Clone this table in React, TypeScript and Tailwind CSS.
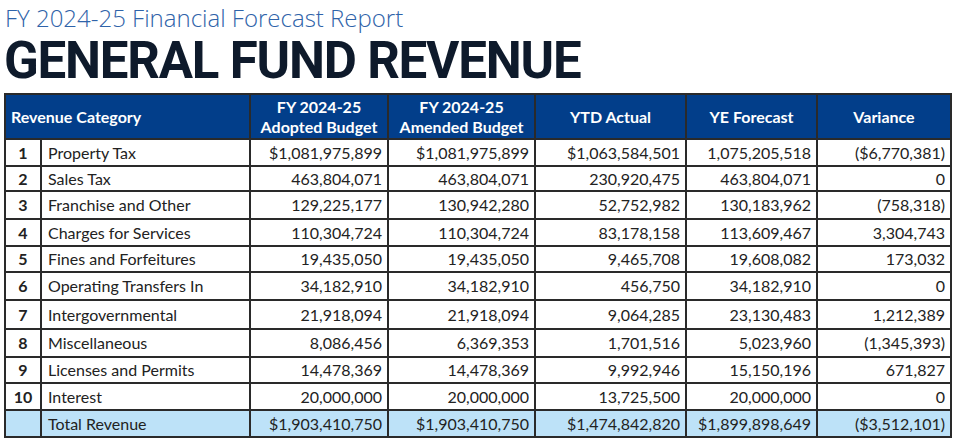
import React, { FC } from "react";

type Row = {
  n: string;
  name: string;
  adopted: string;
  amended: string;
  ytd: string;
  ye: string;
  variance: string;
  h: string;
};

const rows: Row[] = [
  { n: "1", name: "Property Tax", adopted: "$1,081,975,899", amended: "$1,081,975,899", ytd: "$1,063,584,501", ye: "1,075,205,518", variance: "($6,770,381)", h: "h-[27px]" },
  { n: "2", name: "Sales Tax", adopted: "463,804,071", amended: "463,804,071", ytd: "230,920,475", ye: "463,804,071", variance: "0", h: "h-[25px]" },
  { n: "3", name: "Franchise and Other", adopted: "129,225,177", amended: "130,942,280", ytd: "52,752,982", ye: "130,183,962", variance: "(758,318)", h: "h-[28px]" },
  { n: "4", name: "Charges for Services", adopted: "110,304,724", amended: "110,304,724", ytd: "83,178,158", ye: "113,609,467", variance: "3,304,743", h: "h-[27px]" },
  { n: "5", name: "Fines and Forfeitures", adopted: "19,435,050", amended: "19,435,050", ytd: "9,465,708", ye: "19,608,082", variance: "173,032", h: "h-[26px]" },
  { n: "6", name: "Operating Transfers In", adopted: "34,182,910", amended: "34,182,910", ytd: "456,750", ye: "34,182,910", variance: "0", h: "h-[28px]" },
  { n: "7", name: "Intergovernmental", adopted: "21,918,094", amended: "21,918,094", ytd: "9,064,285", ye: "23,130,483", variance: "1,212,389", h: "h-[29px]" },
  { n: "8", name: "Miscellaneous", adopted: "8,086,456", amended: "6,369,353", ytd: "1,701,516", ye: "5,023,960", variance: "(1,345,393)", h: "h-[28px]" },
  { n: "9", name: "Licenses and Permits", adopted: "14,478,369", amended: "14,478,369", ytd: "9,992,946", ye: "15,150,196", variance: "671,827", h: "h-[26px]" },
  { n: "10", name: "Interest", adopted: "20,000,000", amended: "20,000,000", ytd: "13,725,500", ye: "20,000,000", variance: "0", h: "h-[27px]" },
];

const th = "border-2 border-[#2a2a2a] px-2 text-center font-bold leading-[20px] text-white";
const td = "border-2 border-[#2a2a2a] pl-2 pr-[5px] text-right";

const App: FC = () => {
  return (
    <main className="h-[448px] w-[958px] overflow-hidden bg-white">
      <h2 className="pl-[5px] pt-[3px] font-['Open_Sans',sans-serif] text-[24px] font-light leading-[30px] text-[#2f63a9]">
        FY 2024-25 Financial Forecast Report
      </h2>
      <h1 className="mt-[-2px] pl-[4px] font-['Roboto',sans-serif] text-[51px] font-bold leading-[60px] tracking-[-1.2px] text-[#0e1a2b]">
        GENERAL FUND REVENUE
      </h1>
      <table className="ml-[4px] mt-[2px] w-[946px] table-fixed border-collapse border-2 border-[#2a2a2a] font-['Lato',sans-serif] text-[16px] leading-[20px] text-[#222]">
        <colgroup>
          <col className="w-[36px]" />
          <col className="w-[209px]" />
          <col className="w-[138px]" />
          <col className="w-[147px]" />
          <col className="w-[151px]" />
          <col className="w-[131px]" />
          <col className="w-[134px]" />
        </colgroup>
        <thead>
          <tr className="h-[45px] bg-[#023e8a]">
            <th colSpan={2} className={`${th} !pl-[5px] text-left`}>
              Revenue Category
            </th>
            <th className={th}>
              FY 2024-25
              <br />
              Adopted Budget
            </th>
            <th className={th}>
              FY 2024-25
              <br />
              Amended Budget
            </th>
            <th className={th}>YTD Actual</th>
            <th className={th}>YE Forecast</th>
            <th className={th}>Variance</th>
          </tr>
        </thead>
        <tbody>
          {rows.map((r) => (
            <tr key={r.n} className={r.h}>
              <td className="border-2 border-[#2a2a2a] text-center font-bold">{r.n}</td>
              <td className="border-2 border-[#2a2a2a] pl-[6px] pr-2 text-left">{r.name}</td>
              <td className={td}>{r.adopted}</td>
              <td className={td}>{r.amended}</td>
              <td className={td}>{r.ytd}</td>
              <td className={td}>{r.ye}</td>
              <td className={td}>{r.variance}</td>
            </tr>
          ))}
          <tr className="h-[27px] bg-[#bde2f8]">
            <td className="border-2 border-[#2a2a2a]"></td>
            <td className="border-2 border-[#2a2a2a] pl-[6px] pr-2 text-left">Total Revenue</td>
            <td className={td}>$1,903,410,750</td>
            <td className={td}>$1,903,410,750</td>
            <td className={td}>$1,474,842,820</td>
            <td className={td}>$1,899,898,649</td>
            <td className={td}>($3,512,101)</td>
          </tr>
        </tbody>
      </table>
    </main>
  );
};

export default App;
